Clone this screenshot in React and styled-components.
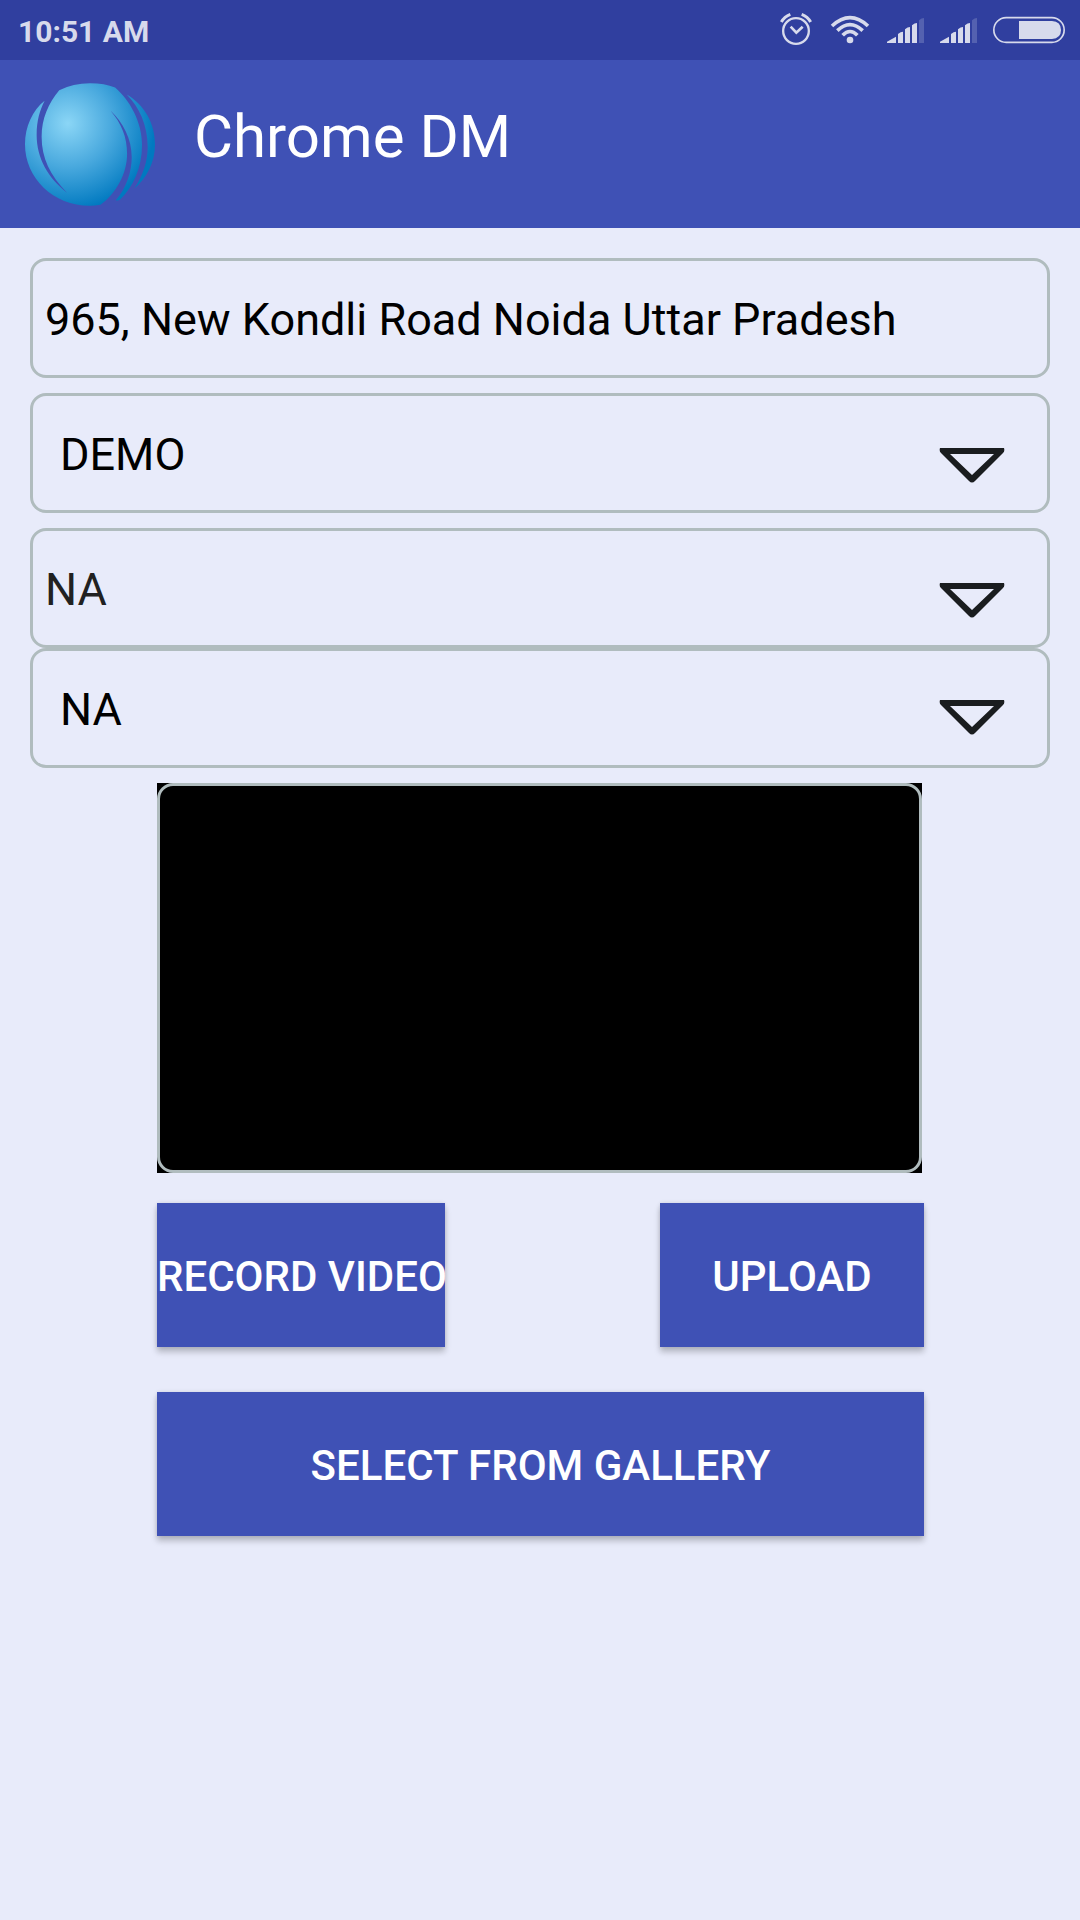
import React from "react";
import styled, { createGlobalStyle } from "styled-components";

const GlobalStyle = createGlobalStyle`
  *, *::before, *::after { box-sizing: border-box; }
  body {
    margin: 0;
    background: #e8ebfa;
    font-family: Roboto, "Liberation Sans", sans-serif;
    color: #000;
  }
  button, input, select { font-family: inherit; }
`;

const StatusBar = styled.div`
  display: flex;
  align-items: center;
  justify-content: space-between;
  height: 60px;
  padding: 0 15px 0 18px;
  background: #303f9f;
  color: #d7daec;
`;

const Clock = styled.time`
  padding-top: 3px;
  font-size: 30px;
  line-height: 36px;
  font-weight: 700;
`;

const StatusIcons = styled.div`
  display: flex;
  align-items: center;
  gap: 16px;
  svg { display: block; height: 36px; }
`;

const Header = styled.header`
  display: flex;
  align-items: flex-start;
  gap: 39px;
  padding: 23px 25px 22px;
  background: #3f51b5;
`;

const Title = styled.h1`
  margin: 0;
  font-size: 60px;
  line-height: 108px;
  font-weight: 400;
  color: #fff;
`;

const Form = styled.form`
  display: flex;
  flex-direction: column;
  padding: 30px;
`;

const Field = styled.label`
  display: grid;
  height: 120px;
  margin-bottom: ${(p) => (p.$joined ? 0 : 15)}px;
  border: 3px solid #b0bcbe;
  border-radius: 16px;
  > * { grid-area: 1 / 1; }
`;

const TextInput = styled.input`
  width: 100%;
  border: 0;
  outline: 0;
  padding: 3px 12px 0;
  background: transparent;
  font-size: 45px;
  color: #000;
`;

const Select = styled.select`
  appearance: none;
  width: 100%;
  border: 0;
  outline: 0;
  padding: 3px 120px 0 ${(p) => (p.$inset ? 27 : 12)}px;
  background: transparent;
  font-size: 45px;
  color: ${(p) => (p.$muted ? "#212121" : "#000")};
`;

const Arrow = styled.svg`
  justify-self: end;
  margin: ${(p) => (p.$raised ? 48 : 51)}px 42px 0 0;
  width: 66px;
  height: 36px;
  pointer-events: none;
`;

const Media = styled.section`
  display: flex;
  flex-direction: column;
  padding: 0 126px 0 127px;
`;

const Preview = styled.div`
  display: flex;
  height: 390px;
  margin: 0 2px 30px 0;
  background: #000;
`;

const Video = styled.video`
  width: 100%;
  height: 100%;
  border: 3px solid #b0bcbe;
  border-radius: 16px;
`;

const Actions = styled.div`
  display: flex;
  justify-content: space-between;
  margin-bottom: 45px;
`;

const Button = styled.button`
  width: ${(p) => p.$width || "100%"};
  height: 144px;
  border: 0;
  padding: 3px 0 0;
  background: #3f51b5;
  color: #fff;
  font-size: 42px;
  font-weight: 500;
  white-space: nowrap;
  box-shadow: 0 5px 6px rgba(0, 0, 0, 0.22), 0 0 4px rgba(0, 0, 0, 0.1);
`;

function AlarmIcon() {
  return (
    <svg width="34" height="36" viewBox="60 36 102 108" fill="none" stroke="currentColor" strokeWidth="7" aria-hidden="true">
      <circle cx="108" cy="93" r="38.5" />
      <path d="M92 80L109 98L128 80" strokeWidth="8" />
      <path d="M64 66Q73 50 91 43M152 66Q143 50 125 43" strokeWidth="9" />
    </svg>
  );
}

function WifiIcon() {
  return (
    <svg width="41" height="36" viewBox="207 36 123 108" fill="none" stroke="currentColor" strokeWidth="11" aria-hidden="true">
      <circle cx="267" cy="120" r="10" fill="currentColor" stroke="none" />
      <path d="M213 78Q267 28 321 78" />
      <path d="M229 92Q267 56 305 92" />
      <path d="M245 106Q267 83 289 106" />
    </svg>
  );
}

function SignalIcon() {
  return (
    <svg width="37" height="36" viewBox="378 36 111 108" fill="currentColor" aria-hidden="true">
      <path d="M378 125L405 110V129H378ZM411 102Q419 95 426 95V129H411ZM432 88Q440 81 447 81V129H432ZM453 76Q461 69 468 69V129H453Z" />
      <path d="M474 61Q482 54 489 54V129H474Z" opacity="0.22" />
    </svg>
  );
}

function BatteryIcon() {
  return (
    <svg width="72" height="36" viewBox="699 36 216 108" aria-hidden="true">
      <rect x="701.5" y="53" width="211" height="74" rx="37" fill="none" stroke="currentColor" strokeWidth="5" />
      <path d="M777 63H876Q903 65 903 90Q903 115 876 117H777Z" fill="currentColor" />
    </svg>
  );
}

function Logo() {
  return (
    <svg width="130" height="123" viewBox="45 39 391 369" role="img" aria-label="Chrome DM logo">
      <defs>
        <radialGradient id="globe" gradientUnits="userSpaceOnUse" cx="174" cy="160" r="262">
          <stop offset="0" stopColor="#8bd6f6" />
          <stop offset="0.5" stopColor="#49a9de" />
          <stop offset="1" stopColor="#0079c0" />
        </radialGradient>
      </defs>
      <g fill="url(#globe)">
        <path d="M148 60Q190 39 240 39Q285 39 316 52C360 90 397 155 397 225C397 295 370 350 332 388Q326 393 318 391C350 355 366 305 366 262C366 205 340 158 302 121C335 160 352 200 352 252C352 310 320 370 272 405Q255 408 240 408C130 408 45 325 45 223C45 170 68 120 104 92C90 120 80 150 80 195C80 265 115 325 172 369C120 315 95 265 95 200C95 145 115 100 148 60Z" />
        <path d="M351 73C405 105 436 160 436 223C436 280 410 325 374 356C400 315 414 275 414 230C414 165 388 110 351 73Z" />
      </g>
    </svg>
  );
}

function Dropdown({ label, value, inset, muted, joined, raised }) {
  return (
    <Field $joined={joined}>
      <Select aria-label={label} defaultValue={value} $inset={inset} $muted={muted}>
        <option>{value}</option>
      </Select>
      <Arrow viewBox="0 0 66 36" $raised={raised} aria-hidden="true">
        <path d="M1 1H65Q66 4 64 6L36 34Q33 37 30 34L2 6Q0 4 1 1ZM11 7L33 28L55 7Z" fill="#1a1d1f" fillRule="evenodd" />
      </Arrow>
    </Field>
  );
}

export default function App() {
  return (
    <>
      <GlobalStyle />
      <StatusBar>
        <Clock>10:51 AM</Clock>
        <StatusIcons>
          <AlarmIcon />
          <WifiIcon />
          <SignalIcon />
          <SignalIcon />
          <BatteryIcon />
        </StatusIcons>
      </StatusBar>
      <Header>
        <Logo />
        <Title>Chrome DM</Title>
      </Header>
      <Form onSubmit={(e) => e.preventDefault()}>
        <Field>
          <TextInput aria-label="Address" defaultValue="965, New Kondli Road Noida Uttar Pradesh" />
        </Field>
        <Dropdown label="Project" value="DEMO" inset />
        <Dropdown label="Category" value="NA" muted joined />
        <Dropdown label="Subcategory" value="NA" inset raised />
        <Media>
          <Preview>
            <Video aria-label="Video preview" />
          </Preview>
          <Actions>
            <Button type="button" $width="288px">RECORD VIDEO</Button>
            <Button type="submit" $width="264px">UPLOAD</Button>
          </Actions>
          <Button type="button">SELECT FROM GALLERY</Button>
        </Media>
      </Form>
    </>
  );
}
